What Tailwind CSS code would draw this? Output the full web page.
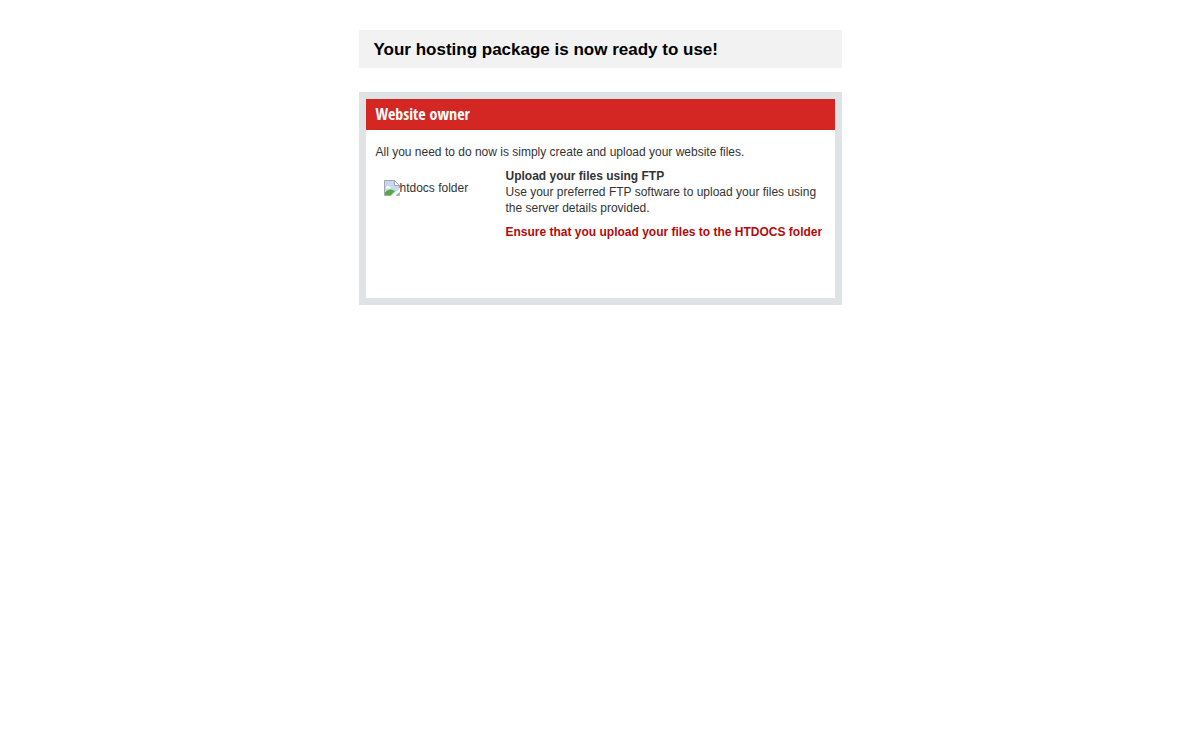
<!DOCTYPE html>
<html lang="en">
<head>
<meta charset="utf-8">
<meta name="viewport" content="width=device-width, initial-scale=1">
<title>Your hosting package is now ready to use!</title>
<script src="https://cdn.jsdelivr.net/npm/@tailwindcss/browser@4"></script>
</head>
<body class="bg-white font-['Liberation_Sans',Arial,sans-serif] text-xs leading-4 text-[#333333]">
<main class="mx-auto mt-[30px] w-full max-w-[483px]">
  <h1 class="bg-[#f2f2f2] px-[15px] pt-2 pb-[6px] text-[17px] leading-6 font-bold text-black">Your hosting package is now ready to use!</h1>
  <section class="mt-6 border-[7px] border-[#dfe3e6]">
    <h2 class="bg-[#d42622] px-[10px] pt-[3px] pb-1 font-['Open_Sans_Condensed','Liberation_Sans_Narrow',sans-serif] text-base leading-6 font-bold text-white">Website owner</h2>
    <div class="px-[10px] pt-[14px] pb-[58px]">
      <p>All you need to do now is simply create and upload your website files.</p>
      <div class="mt-2 flex">
        <div class="flex w-[130px] shrink-0 items-start px-2 pt-3">
          <svg class="size-4 shrink-0" viewBox="0 0 16 16" aria-hidden="true">
            <path d="M.5.5h10l5 5v4L9 15.500H.5z" fill="#c6d7f4"/>
            <path d="M2 7.500c0-2 2.500-2.500 3-1 1.500-.5 2.500 1 1.500 2H2z" fill="#fff"/>
            <path d="M1 15v-2.500C4 9 7.500 8.500 11 11l-4 4z" fill="#55ab3c"/>
            <path d="M7.500 15.500H.5V.5h10l5 5V8" fill="none" stroke="#a4a8ac"/>
            <path d="M10.500.5v5h5z" fill="#fff" stroke="#a4a8ac"/>
            <path d="M7 16l9-7.500V11l-5.500 5z" fill="#fff"/>
            <path d="M12 15.500l3.500-3v3z" fill="#8fb487" stroke="#a4a8ac" stroke-width=".7"/>
          </svg>
          <span class="whitespace-nowrap">htdocs folder</span>
        </div>
        <div>
          <h3 class="font-bold">Upload your files using FTP</h3>
          <p>Use your preferred FTP software to upload your files using the server details provided.</p>
          <p class="mt-2 font-bold text-[#b30b0b]">Ensure that you upload your files to the HTDOCS folder</p>
        </div>
      </div>
    </div>
  </section>
</main>
</body>
</html>
